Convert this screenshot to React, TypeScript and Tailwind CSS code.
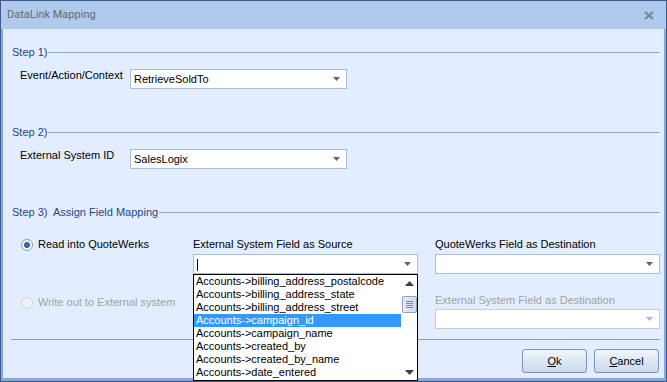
import React from "react";

const items = [
  "Accounts->billing_address_postalcode",
  "Accounts->billing_address_state",
  "Accounts->billing_address_street",
  "Accounts->campaign_id",
  "Accounts->campaign_name",
  "Accounts->created_by",
  "Accounts->created_by_name",
  "Accounts->date_entered",
];

const Caret = ({ disabled }: { disabled?: boolean }) => (
  <svg width="7" height="4" viewBox="0 0 7 4" className="shrink-0">
    <path d="M0 0h7L3.5 4z" fill={disabled ? "#c9a9cf" : "#4d6496"} />
  </svg>
);

type ComboProps = {
  value?: string;
  disabled?: boolean;
  cursor?: boolean;
};

const Combo = ({ value, disabled, cursor }: ComboProps) => (
  <div
    className={`h-[20px] bg-white border flex items-center pl-[3px] pr-[6px] ${
      disabled ? "border-[#c8ccd2]" : "border-[#a9bedb]"
    }`}
  >
    <span className="flex-1 text-[11px] leading-[13px] text-black">
      {cursor ? <span className="inline-block w-px h-[12px] bg-black align-middle" /> : value}
    </span>
    <Caret disabled={disabled} />
  </div>
);

const StepHeader = ({ title }: { title: string }) => (
  <div className="flex items-center h-[13px] pl-[9px] pr-[4px]">
    <span className="text-[11px] leading-[13px] text-[#1d4688] whitespace-pre">{title}</span>
    <div className="flex-1 h-px bg-[#8fa4c2] ml-px" />
  </div>
);

const Radio = ({ checked, disabled, label }: { checked?: boolean; disabled?: boolean; label: string }) => (
  <div className="flex items-center gap-[5px] pl-[1px]">
    <div
      className={`w-[12px] h-[12px] rounded-full border flex items-center justify-center ${
        disabled
          ? "border-[#cfd3d8] bg-[#f1f3f5]"
          : "border-[#8b9db6] bg-gradient-to-br from-[#e9eef4] to-white"
      }`}
    >
      {checked && <div className="w-[6px] h-[6px] rounded-full bg-[#2f74c4] border border-[#1b4f8e]" />}
    </div>
    <span className={`text-[11px] leading-[13px] ${disabled ? "text-[#a3a39b]" : "text-black"}`}>{label}</span>
  </div>
);

const Button = ({ accel, rest }: { accel: string; rest: string }) => (
  <button className="w-[65px] h-[24px] rounded-[3px] border border-[#7d95b8] bg-gradient-to-b from-[#f2f6fb] via-[#dde8f5] to-[#c9d9ee] text-[11px] text-black">
    <span className="underline">{accel}</span>
    {rest}
  </button>
);

const DropList = () => (
  <div className="absolute left-0 top-[20px] w-[225px] h-[107px] bg-white border border-black flex z-10">
    <div className="flex-1 flex flex-col">
      {items.map((it, i) => (
        <div
          key={it}
          className={`h-[13px] text-[11px] leading-[13px] pl-[2px] whitespace-nowrap ${
            i === 3 ? "bg-[#3399ff] text-white" : "text-black"
          }`}
        >
          {it}
        </div>
      ))}
    </div>
    <div className="w-[16px] flex flex-col items-center bg-white">
      <div className="h-[16px] flex items-center justify-center">
        <svg width="9" height="5" viewBox="0 0 9 5">
          <path d="M0 5h9L4.5 0z" fill="#3a3f4a" />
        </svg>
      </div>
      <div className="mt-[5px] w-[15px] h-[17px] rounded-[2px] border border-[#8ea2bd] bg-gradient-to-r from-[#e6ecf4] to-[#d2dbe8] flex flex-col items-center justify-center gap-[1px]">
        <div className="w-[7px] h-px bg-[#7a8aa3]" />
        <div className="w-[7px] h-px bg-[#7a8aa3]" />
        <div className="w-[7px] h-px bg-[#7a8aa3]" />
        <div className="w-[7px] h-px bg-[#7a8aa3]" />
      </div>
      <div className="flex-1" />
      <div className="h-[16px] flex items-center justify-center">
        <svg width="9" height="5" viewBox="0 0 9 5">
          <path d="M0 0h9L4.5 5z" fill="#3a3f4a" />
        </svg>
      </div>
    </div>
  </div>
);

export default function App() {
  return (
    <div
      className="w-[667px] h-[382px] flex flex-col bg-[#3c5b8c] p-px"
      style={{ fontFamily: '"Liberation Sans", Arial, sans-serif' }}
    >
      <div className="h-[28px] shrink-0 bg-[#b0caee] flex items-center justify-between pl-[6px] pr-[12px]">
        <span className="text-[11px] text-[#65686e]" style={{ fontFamily: "Roboto, sans-serif" }}>
          DataLink Mapping
        </span>
        <svg width="10" height="9" viewBox="0 0 10 9">
          <path d="M1 1l8 7M9 1L1 8" stroke="#7a8598" strokeWidth="2.2" />
        </svg>
      </div>
      <div className="flex-1 bg-[#86a8da] px-[2px] pb-[3px]">
        <div className="h-full bg-[#e2eeff] pt-[17px] flex flex-col">
          <StepHeader title="Step 1)" />
          <div className="flex items-start mt-[10px] pl-[17px]">
            <span className="w-[110px] text-[11px] leading-[13px] text-black">Event/Action/Context</span>
            <div className="w-[217px]">
              <Combo value="RetrieveSoldTo" />
            </div>
          </div>

          <div className="mt-[37px]">
            <StepHeader title="Step 2)" />
          </div>
          <div className="flex items-start mt-[10px] pl-[17px]">
            <span className="w-[110px] text-[11px] leading-[13px] text-black">External System ID</span>
            <div className="w-[217px]">
              <Combo value="SalesLogix" />
            </div>
          </div>

          <div className="mt-[37px]">
            <StepHeader title="Step 3)  Assign Field Mapping" />
          </div>

          <div className="mt-[19px] pl-[17px] grid grid-cols-[156px_225px_225px] gap-x-[17px]">
            <div className="flex flex-col">
              <Radio checked label="Read into QuoteWerks" />
              <div className="mt-[45px]">
                <Radio disabled label="Write out to External system" />
              </div>
            </div>
            <div className="flex flex-col">
              <span className="text-[11px] leading-[13px] text-black">External System Field as Source</span>
              <div className="mt-[3px] relative">
                <Combo cursor />
                <DropList />
              </div>
            </div>
            <div className="flex flex-col">
              <span className="text-[11px] leading-[13px] text-black">QuoteWerks Field as Destination</span>
              <div className="mt-[3px]">
                <Combo />
              </div>
              <span className="mt-[20px] text-[11px] leading-[13px] text-[#a3a39b]">
                External System Field as Destination
              </span>
              <div className="mt-[2px]">
                <Combo disabled />
              </div>
            </div>
          </div>

          <div className="mt-[10px] ml-[8px] mr-[4px] h-px bg-[#8a9fc0]" />

          <div className="mt-[9px] flex justify-end gap-[7px] pr-[5px]">
            <Button accel="O" rest="k" />
            <Button accel="C" rest="ancel" />
          </div>
        </div>
      </div>
    </div>
  );
}
